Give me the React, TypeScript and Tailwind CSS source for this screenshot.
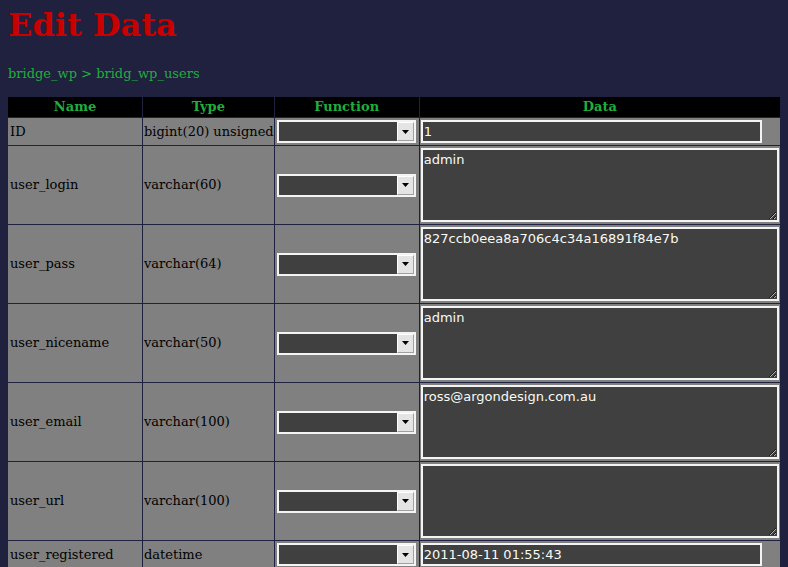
import React from 'react';

type Row = { name: string; type: string; value: string; multi: boolean };

const rows: Row[] = [
  { name: 'ID', type: 'bigint(20) unsigned', value: '1', multi: false },
  { name: 'user_login', type: 'varchar(60)', value: 'admin', multi: true },
  { name: 'user_pass', type: 'varchar(64)', value: '827ccb0eea8a706c4c34a16891f84e7b', multi: true },
  { name: 'user_nicename', type: 'varchar(50)', value: 'admin', multi: true },
  { name: 'user_email', type: 'varchar(100)', value: 'ross@argondesign.com.au', multi: true },
  { name: 'user_url', type: 'varchar(100)', value: '', multi: true },
  { name: 'user_registered', type: 'datetime', value: '2011-08-11 01:55:43', multi: false },
];

function FakeSelect() {
  return (
    <div className="flex h-[23px] w-[139px] border-2 border-[#f4f4f4] bg-[#404040]">
      <div className="flex-1" />
      <div className="flex w-[17px] items-center justify-center border-t border-l border-t-white border-l-white border-r border-b border-r-[#a0a0a0] border-b-[#a0a0a0] bg-[#e4e4e4]">
        <svg width="7" height="4" viewBox="0 0 7 4">
          <path d="M0 0h7L3.5 4z" fill="#000" />
        </svg>
      </div>
    </div>
  );
}

const fieldCls =
  'block border-2 border-[#f4f4f4] bg-[#404040] text-[#fafaf4] text-[13px] leading-[16px] outline-none px-[1px] font-["DejaVu_Sans",sans-serif]';

export default function App() {
  return (
    <div className="min-h-[567px] bg-[#20203f] px-2 pt-[5px] font-['DejaVu_Serif',serif]">
      <h1 className="text-[32px] font-bold leading-[40px] text-[#c80000]">Edit Data</h1>
      <p className="mt-[20px] text-[13px] leading-[18px] text-[#1fae3c]">bridge_wp &gt; bridg_wp_users</p>
      <table className="mt-[13px] -ml-px w-[774px] border-collapse text-[13px] text-black">
        <thead>
          <tr className="h-[21px] bg-black text-[#1fae3c]">
            <th className="w-[135px] border border-[#20203f] p-0 font-bold">Name</th>
            <th className="w-[131px] border border-[#20203f] p-0 font-bold">Type</th>
            <th className="w-[145px] border border-[#20203f] p-0 font-bold">Function</th>
            <th className="border border-[#20203f] p-0 font-bold">Data</th>
          </tr>
        </thead>
        <tbody>
          {rows.map(r => (
            <tr key={r.name} className="bg-[#808080]">
              <td className="border border-[#20203f] pl-[2px] pr-0 align-middle">{r.name}</td>
              <td className="border border-[#20203f] pl-[1px] pr-0 align-middle whitespace-nowrap">{r.type}</td>
              <td className="border border-[#20203f] px-[2px] align-middle">
                <FakeSelect />
              </td>
              <td className="border border-[#20203f] px-[1px] py-[2px] align-middle">
                {r.multi ? (
                  <textarea readOnly defaultValue={r.value} className={`${fieldCls} h-[74px] w-[358px] resize pt-[2px]`} />
                ) : (
                  <input readOnly defaultValue={r.value} className={`${fieldCls} h-[23px] w-[341px]`} />
                )}
              </td>
            </tr>
          ))}
        </tbody>
      </table>
    </div>
  );
}
